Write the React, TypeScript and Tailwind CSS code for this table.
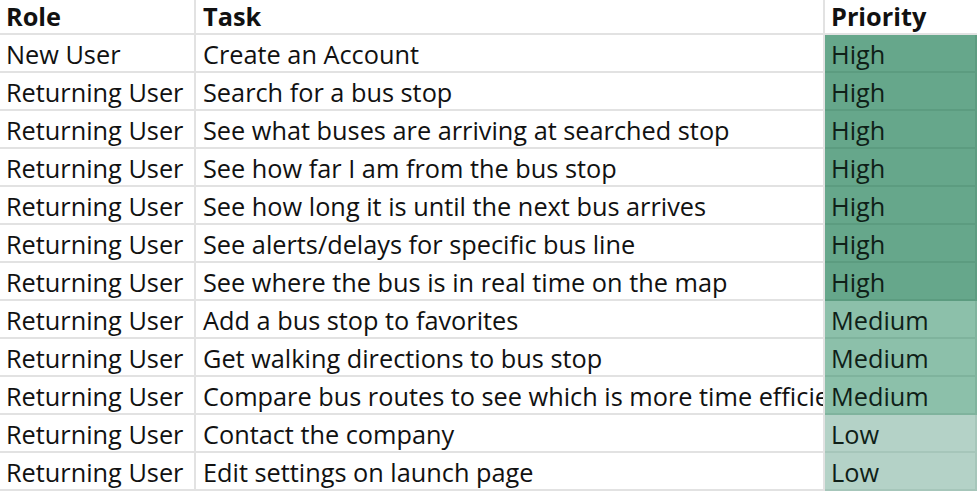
import React from 'react';

type Row = { role: string; task: string; priority: 'High' | 'Medium' | 'Low' };

const rows: Row[] = [
    { role: 'New User', task: 'Create an Account', priority: 'High' },
    { role: 'Returning User', task: 'Search for a bus stop', priority: 'High' },
    { role: 'Returning User', task: 'See what buses are arriving at searched stop', priority: 'High' },
    { role: 'Returning User', task: 'See how far I am from the bus stop', priority: 'High' },
    { role: 'Returning User', task: 'See how long it is until the next bus arrives', priority: 'High' },
    { role: 'Returning User', task: 'See alerts/delays for specific bus line', priority: 'High' },
    { role: 'Returning User', task: 'See where the bus is in real time on the map', priority: 'High' },
    { role: 'Returning User', task: 'Add a bus stop to favorites', priority: 'Medium' },
    { role: 'Returning User', task: 'Get walking directions to bus stop', priority: 'Medium' },
    { role: 'Returning User', task: 'Compare bus routes to see which is more time efficient', priority: 'Medium' },
    { role: 'Returning User', task: 'Contact the company', priority: 'Low' },
    { role: 'Returning User', task: 'Edit settings on launch page', priority: 'Low' },
];

const priorityBg = {
    High: 'bg-[#66a78b] border-[#5c9c80]',
    Medium: 'bg-[#8cc0aa] border-[#7fb39d]',
    Low: 'bg-[#b4d2c7] border-[#a6c6ba]',
};

export default function App() {
    return (
        <div
            className="w-[977px] h-[491px] overflow-hidden bg-white text-[25.3px] text-[#111] leading-none"
            style={{ fontFamily: '"Open Sans", "Noto Sans", sans-serif' }}
        >
            {/* Header */}
            <div className="grid grid-cols-[196px_629px_152px] h-[35px] font-bold">
                <div className="border-r-2 border-b-2 border-[#e2e2e2] px-[6px] flex items-center pt-[1px] overflow-hidden whitespace-nowrap">Role</div>
                <div className="border-r-2 border-b-2 border-[#e2e2e2] px-[7px] flex items-center pt-[1px] overflow-hidden whitespace-nowrap">Task</div>
                <div className="border-b-2 border-[#e2e2e2] px-[6px] flex items-center pt-[1px] overflow-hidden whitespace-nowrap">Priority</div>
            </div>

            {rows.map((r, i) => (
                <div key={i} className="grid grid-cols-[196px_629px_152px] h-[38px]">
                    <div className="border-r-2 border-b-2 border-[#e2e2e2] pl-[6px] flex items-center pt-[3px] overflow-hidden whitespace-nowrap">{r.role}</div>
                    {/* long task text is clipped at the column edge, like a spreadsheet cell */}
                    <div className="border-r-2 border-b-2 border-[#e2e2e2] pl-[7px] flex items-center pt-[3px] overflow-hidden whitespace-nowrap">{r.task}</div>
                    <div className={`border-b-2 border-r-2 pl-[6px] flex items-center pt-[3px] overflow-hidden whitespace-nowrap text-[#0f1f18] ${priorityBg[r.priority]}`}>{r.priority}</div>
                </div>
            ))}
        </div>
    );
}
